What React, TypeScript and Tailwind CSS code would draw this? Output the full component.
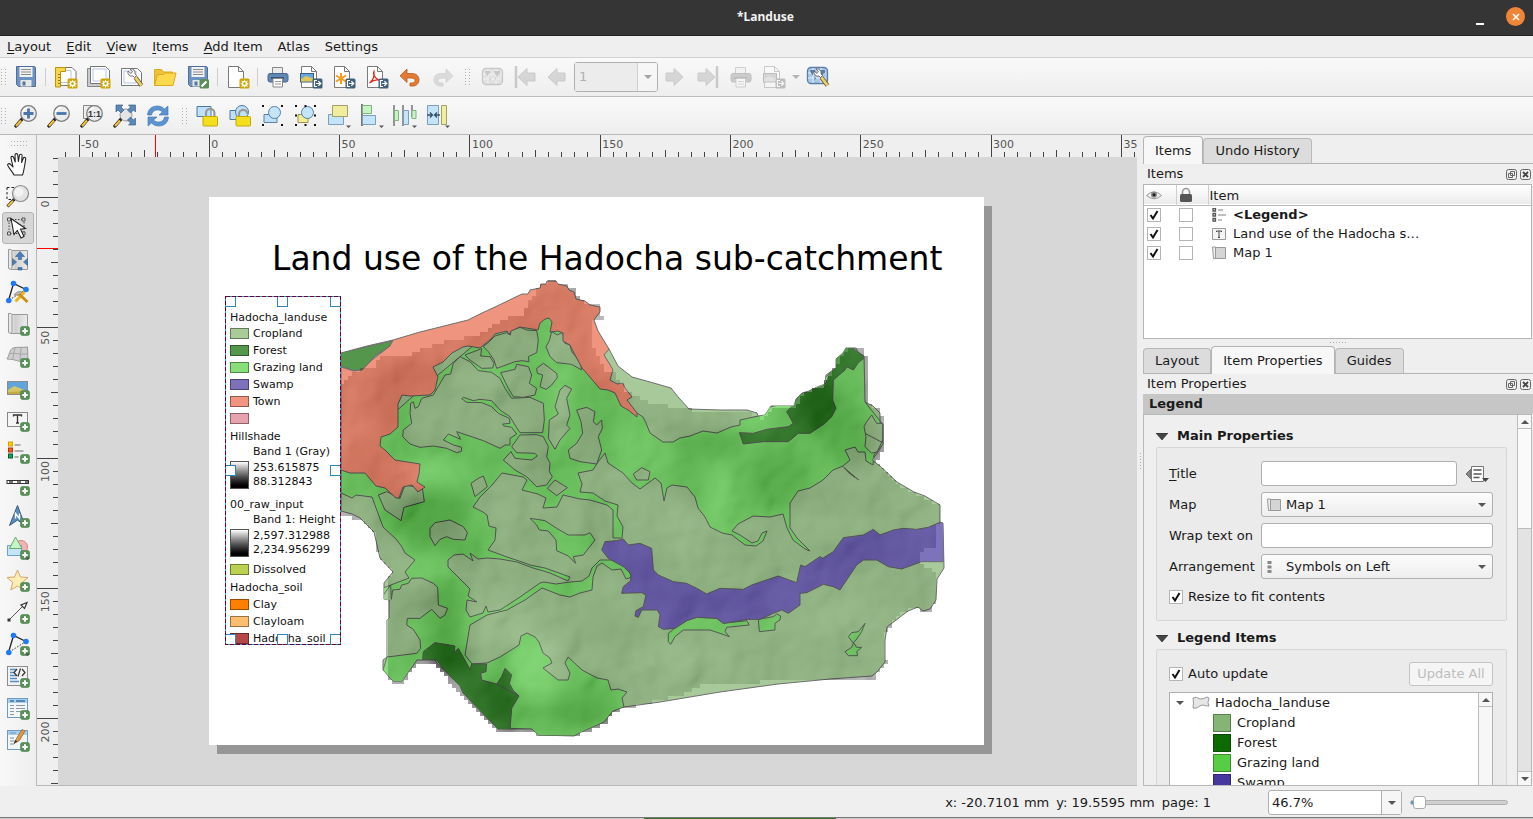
import React, { useState } from "react";
import type { ReactNode } from "react";

type Point = [number, number];

/* ---------- small icon parts, all on a 24 x 24 grid ---------- */

function Icon({ children, dim = false }: { children: ReactNode; dim?: boolean }) {
  return (
    <svg viewBox="0 0 24 24" aria-hidden="true" className={dim ? "h-6 w-6 shrink-0 opacity-35 grayscale" : "h-6 w-6 shrink-0"} fill="none">
      {children}
    </svg>
  );
}

const PlusBadge = () => (
  <g>
    <rect x="14.5" y="14.5" width="9" height="9" rx="2" fill="#5b8f5a" stroke="#4b7c4b" strokeWidth=".6" />
    <path d="M19 16.3v5.4M16.3 19h5.4" stroke="#fff" strokeWidth="2" />
  </g>
);
const StarBadge = () => (
  <g>
    <rect x="13.5" y="13.5" width="10" height="10" rx="1.5" fill="#cba400" />
    <path d="M18.5 14.5l1 2 2.3-.9-.8 2.3 2 .8-2 1 .9 2.2-2.3-.8-1 2-1-2-2.3.9.9-2.3-2-1 2-.9-.9-2.3 2.3.9z" fill="#fff" />
    <circle cx="18.5" cy="18.6" r="1.3" fill="#cba400" />
  </g>
);
const ExportBadge = () => (
  <g>
    <rect x="13.5" y="13.5" width="10" height="10" rx="1.5" fill="#43607a" />
    <path d="M18 15.5h-2.5v6H18M17 18.5h4M19.3 16.3l2.4 2.2-2.4 2.2" stroke="#fff" strokeWidth="1.2" />
  </g>
);
const Sheet = () => (
  <path d="M2.5 1.5h10l5 5v16h-15zM12.5 1.5v5h5" fill="#fff" stroke="#7a7a7a" />
);
const DropMark = () => <path d="M19 21.5h5l-2.5 2.5z" fill="#555" />;
const Handle = () => (
  <g>
    <path d="M9 14l-7 8" stroke="#222" strokeWidth="3.4" strokeLinecap="round" />
    <path d="M7 16.400l-5 5.500" stroke="#f3c13a" strokeWidth="2.200" />
  </g>
);
const Lens = () => (
  <g>
    <Handle />
    <circle cx="14.500" cy="9.500" r="7.800" fill="#ececec" stroke="#7d7d7d" strokeWidth="1.300" />
    <path d="M9 8a6 6 0 0 1 5-4.500" stroke="#fff" strokeWidth="1.500" />
  </g>
);
const Floppy = () => (
  <g>
    <path d="M2.500 1.500h18l1 1v19h-17l-2-2z" fill="#6c93c4" stroke="#4f6f98" />
    <rect x="5.500" y="2" width="13" height="10" fill="#f2f2f0" />
    <path d="M7 4.500h10M7 7h10M7 9.500h10" stroke="#8b8b8b" />
    <path d="M6.500 15h11v6.500h-11z" fill="#e7e7e4" />
    <rect x="8.500" y="16.500" width="3" height="4" fill="#56779f" />
  </g>
);
const Wrench = () => (
  <g>
    <path d="M8 6a4 4 0 0 0 5 5l1.500 1.500 2-2L15 9a4 4 0 0 0-5-5l2.500 2.500-1.500 2z" fill="#fff" stroke="#666" strokeWidth=".9" />
    <path d="M15.500 12.500l6 8" stroke="#6e5b21" strokeWidth="4.400" />
    <path d="M15.500 12.500l6 8" stroke="#ead16f" strokeWidth="2.800" />
  </g>
);
const Roll = () => (
  <g>
    <path d="M4 2.500h17.500v19H5z" fill="url(#rollFill)" stroke="#999" />
    <path d="M2.500 1.500c3-.5 3.500.5 3.500 2V20c0 1-3.500 2-3.500 0z" fill="#e9e9e9" stroke="#999" />
  </g>
);
const Printer = () => (
  <g>
    <path d="M6.500 2.500h10v7h-10z" fill="#ececec" stroke="#888" />
    <rect x="2" y="8.500" width="20" height="8.500" rx="2" fill="#6287b4" stroke="#46658c" />
    <path d="M5 13h13" stroke="#2e4663" strokeWidth="1.500" />
    <path d="M7 13.500h9.500v8.500H7z" fill="#fff" stroke="#888" />
    <path d="M9 16.500h6M9 19h6" stroke="#999" />
  </g>
);
const Photo = () => (
  <g>
    <rect x="1.500" y="8.500" width="13" height="8.500" fill="#66a7db" stroke="#3d5e7c" />
    <path d="M2 14l5-3 7 2.500v3H2z" fill="#e0c557" />
  </g>
);
const Globe = () => (
  <g>
    <rect x="1.500" y="2.500" width="20" height="16" rx="3.500" fill="#a9c8ea" stroke="#5b7ea8" strokeWidth="1.300" />
    <path d="M7 3v15M15 3v15M2 8h18M2 13h18" stroke="#e8f0f8" />
    <path d="M4 5h5l.5 2-2 1-1 2.500L4.500 7zM13 5h6v3l-2 1-1 2-2-3zM8.500 11.500l1.500 1.500-1.500 3zM14 11l1.500 1-1 3z" fill="#5f7d9f" />
  </g>
);
const Nodes = () => (
  <g>
    <path d="M2.500 20.500L7.500 3.500l12.500 6" stroke="#222" strokeWidth="1.300" />
    <path d="M20 9.500L2.500 20.500" stroke="#333" strokeDasharray="1.500 1.500" />
    <circle cx="7.500" cy="3.500" r="2.800" fill="#1f7af5" />
    <circle cx="20" cy="9.500" r="2.800" fill="#1f7af5" />
    <circle cx="2.800" cy="20.500" r="2.800" fill="#1f7af5" />
  </g>
);
const Padlock = ({ open = false }: { open?: boolean }) => (
  <g>
    <path d={open ? "M11 12.500V10a4.200 4.200 0 0 1 8.400 0" : "M11 13.500V9a4.200 4.200 0 0 1 8.400 0v4"} stroke="#9a9a94" strokeWidth="2.200" />
    <rect x="8" y="12.500" width="14.500" height="9.500" rx="1" fill="#f4df1c" stroke="#c7a800" />
  </g>
);
const Corners = () => (
  <path d="M1 1h2v2H1zM10.500 1h2v2h-2zM20 1h2v2h-2zM1 10.500h2v2H1zM20 10.500h2v2h-2zM1 20h2v2H1zM10.500 20h2v2h-2zM20 20h2v2h-2z" fill="#111" />
);

const fileTools: { name: string; art: ReactNode; dim?: boolean; gap?: boolean }[] = [
  { name: "Save Project", art: <Floppy />, gap: true },
  {
    name: "New Layout",
    art: (
      <g>
        <path d="M3 2.500h15l4 4v14H3z" fill="#fff" stroke="#777" />
        <path d="M6 5.500h11v12H6z" stroke="#b7c5ea" />
        <path d="M1.500 2.500h10v4h-5v15.500h-5z" fill="#f4d648" stroke="#b79411" />
        <path d="M4 9.500h2M4 12.500h2M4 15.500h2M4 18.500h2" stroke="#9b7d0f" />
        <StarBadge />
      </g>
    ),
  },
  {
    name: "Duplicate Layout",
    art: (
      <g>
        <path d="M.5 3.500h4v15h14v3H.5z" fill="#c9c9c9" stroke="#888" />
        <path d="M3.500 1.500h15l4 4v13h-19z" fill="#fff" stroke="#777" />
        <path d="M6 4h13v12H6z" stroke="#b7c5ea" />
        <StarBadge />
      </g>
    ),
  },
  {
    name: "Layout Manager",
    art: (
      <g>
        <path d="M1.500 3.500h16l4 4v13h-20z" fill="#fff" stroke="#777" />
        <path d="M4 6h12v12H4z" stroke="#b7c5ea" />
        <Wrench />
      </g>
    ),
  },
  {
    name: "Add Items from Template",
    art: (
      <g>
        <path d="M1.500 20.500v-16h7l2 2.500h9v13.500z" fill="#eec23a" stroke="#d9ab1d" />
        <path d="M1.500 20.500L4.500 9.500h6l2-1.500h10.500l-3 12.500z" fill="#fbd94d" stroke="#d9ab1d" />
      </g>
    ),
  },
  {
    name: "Save as Template",
    art: (
      <g>
        <Floppy />
        <rect x="13.500" y="14" width="9.500" height="9.500" rx="1.500" fill="#5b8f5a" />
        <path d="M15.500 21.500l5-5" stroke="#fff" strokeWidth="2.200" />
      </g>
    ),
    gap: true,
  },
  { name: "Page Properties", art: <g><Sheet /><StarBadge /></g>, gap: true },
  { name: "Print Layout", art: <Printer /> },
  { name: "Export as Image", art: <g><Sheet /><Photo /><ExportBadge /></g> },
  {
    name: "Export as SVG",
    art: (
      <g>
        <Sheet />
        <path d="M9 8v11M4 10.500l10 6M4 16.500l10-6" stroke="#f79a1c" strokeWidth="2" />
        <ExportBadge />
      </g>
    ),
  },
  {
    name: "Export as PDF",
    art: (
      <g>
        <Sheet />
        <path d="M4.500 18c4-3 5-8 4.500-11.500-1.500 3 2 8 5 8.500-4-.5-7 1-9.500 3z" stroke="#e0301e" strokeWidth="1.300" />
        <ExportBadge />
      </g>
    ),
  },
  {
    name: "Undo",
    art: <path d="M9 4v4.500h5c4.500 0 7 3 7 6.200 0 3.500-2.500 6.300-6 6.300h-3v-3h2c2 0 3-1 3-2.500S15.500 13 13 13H9v4.500l-7-6.700z" fill="#e37b35" stroke="#b85a1f" strokeWidth=".8" />,
  },
  {
    name: "Redo",
    art: <path d="M15 4v4.500h-5c-4.500 0-7 3-7 6.200C3 18.200 5.500 21 9 21h3v-3h-2c-2 0-3-1-3-2.500S8.500 13 11 13h4v4.500l7-6.700z" fill="#a9b0a9" stroke="#8b918b" strokeWidth=".8" />,
    dim: true,
  },
];

const zoomTools: { name: string; art: ReactNode }[] = [
  { name: "Zoom In", art: <g><Lens /><path d="M14.500 4.500v10M9.500 9.500h10" stroke="#4a76ab" strokeWidth="2.800" /></g> },
  { name: "Zoom Out", art: <g><Lens /><path d="M9.500 9.500h10" stroke="#4a76ab" strokeWidth="2.800" /></g> },
  {
    name: "Zoom to 100%",
    art: (
      <g>
        <path d="M3.500 1.500h9v13h-9z" fill="#eee" stroke="#888" />
        <Lens />
        <text x="8" y="13" fontSize="9" fontWeight="bold" fill="#333" fontFamily="Liberation Sans, sans-serif">1:1</text>
      </g>
    ),
  },
  {
    name: "Zoom Full",
    art: (
      <g>
        <Handle />
        <circle cx="13" cy="11" r="6" fill="#e4e4e4" stroke="#999" />
        <path d="M3 1h7l-2 2 3 3-3 3-3-3-2 2zM22.500 1v7l-2-2-3 3-3-3 3-3-2-2zM22.500 21h-7l2-2-3-3 3-3 3 3 2-2z" fill="#5a86b9" stroke="#3c628f" strokeWidth=".7" />
      </g>
    ),
  },
  {
    name: "Refresh View",
    art: (
      <path d="M1.500 11C2 5 6 2 11.500 2c3.500 0 5.500 1.500 7 3L22 2v9h-9l3.300-3C15 6.500 13.500 6 11.500 6 8 6 6 8 5.500 11zM22.500 13c-.5 6-4.500 9-10 9-3.500 0-5.500-1.500-7-3L2 22v-9h9l-3.300 3c1.300 1.500 2.800 2 4.800 2 3.500 0 5.500-2 6-5z" fill="#5c93d1" stroke="#3e73ae" strokeWidth=".6" />
    ),
  },
];

const arrangeTools: { name: string; art: ReactNode }[] = [
  { name: "Lock Selected Items", art: <g><path d="M2 2.500h14v10H2z" fill="#bfe0f8" stroke="#4c7b9e" /><Padlock /></g> },
  {
    name: "Unlock All Items",
    art: <g><path d="M2 6.500h8v9H2z" fill="#bfe0f8" stroke="#4c7b9e" /><circle cx="14" cy="8" r="6.500" fill="#bfe0f8" stroke="#4c7b9e" /><Padlock open /></g>,
  },
  {
    name: "Group Items",
    art: <g><path d="M3 10.500h13v8H3z" fill="#bfe0f8" stroke="#56829f" /><circle cx="13.500" cy="8.500" r="6" fill="#c4e4f9" stroke="#56829f" /><path d="M1 1h2v2H1zM20 1h2v2h-2zM1 20h2v2H1zM20 20h2v2h-2z" fill="#111" /></g>,
  },
  {
    name: "Ungroup Items",
    art: <g><path d="M4 10.500h10v8H4z" fill="#f2ee98" stroke="#9b9350" /><circle cx="13.500" cy="8.500" r="6" fill="#c4e4f9" stroke="#56829f" /><Corners /></g>,
  },
  {
    name: "Raise Selected Items",
    art: <g><path d="M1.500 10.500h15v10h-15z" fill="#c4e4f9" stroke="#7d9fb5" /><path d="M5.500 1.500h15v11h-15z" fill="#f0ee9c" stroke="#a3a06b" /><DropMark /></g>,
  },
  {
    name: "Align Selected Items",
    art: <g><path d="M2 0v22" stroke="#333" strokeWidth="1.300" /><path d="M2.500 1.500h9v8h-9z" fill="#c5f5c4" stroke="#82b283" /><path d="M2.500 11.500h13v9h-13z" fill="#c4e4f9" stroke="#7d9fb5" /><DropMark /></g>,
  },
  {
    name: "Distribute Objects",
    art: (
      <g>
        <path d="M1 1v21M10 1v21M19 1v12" stroke="#333" />
        <path d="M1.500 6.500h4v10h-4zM19 6.500h4v8h-4z" fill="#c5f5c4" stroke="#82b283" />
        <path d="M10.500 6.500h5v14h-5z" fill="#c4e4f9" stroke="#7d9fb5" />
        <DropMark />
      </g>
    ),
  },
  {
    name: "Resize Objects",
    art: (
      <g>
        <path d="M1.500 1.500h11v19h-11z" fill="#c4e4f9" stroke="#7d9fb5" />
        <path d="M15.500 1.500h5v19h-5z" fill="#f0ee9c" stroke="#a3a06b" />
        <path d="M1 11h5M4 8.500L6.500 11 4 13.500M14 11H9M11 8.500L8.500 11l2.500 2.500" stroke="#35506a" strokeWidth="1.300" />
        <DropMark />
      </g>
    ),
  },
];

const sideTools: { name: string; art: ReactNode; active?: boolean }[] = [
  {
    name: "Pan Layout",
    art: <path d="M8 23C6.500 19.500 3.500 17 1.800 13.500c-.7-1.700 1.400-2.600 2.700-1.200L7 15 5 6c-.3-1.900 2.200-2.200 2.700-.4L9.300 10 9 3c0-1.900 2.600-1.900 2.800 0l.6 6.500 1-6c.3-1.800 2.800-1.500 2.700.4L15.600 10.500l1.700-4.200c.7-1.600 2.800-1 2.400.8L18.500 14.500C18 17.500 17.500 20.500 16.500 23z" fill="#fff" stroke="#222" strokeWidth="1.100" strokeLinejoin="round" />,
  },
  {
    name: "Zoom",
    art: (
      <g>
        <path d="M1 3.500h12M1 3.500v12h6" stroke="#222" strokeDasharray="2.500 2" />
        <path d="M8.500 15l-7 7.500" stroke="#333" strokeWidth="3.200" />
        <path d="M7 17l-5 5" stroke="#f3c13a" strokeWidth="2" />
        <circle cx="14.500" cy="9.500" r="8" fill="#e3e3e3" stroke="#8a8a8a" strokeWidth="1.200" />
        <circle cx="13" cy="8" r="4.500" fill="#f3f3f3" />
      </g>
    ),
  },
  {
    name: "Select/Move Item",
    active: true,
    art: (
      <g>
        <path d="M3 3.500h15M3 3.500v14h15v-14" stroke="#444" strokeDasharray="1.500 1.500" />
        <path d="M1.500 2h3v3h-3zM16 2h3v3h-3zM1.500 16h3v3h-3zM16 16h3v3h-3z" fill="#ddd" stroke="#555" />
        <path d="M5 2.500l3 16 3.300-4 3.700 7.500 3-1.500-3.500-7.300 5-.7z" fill="#fff" stroke="#222" strokeWidth="1.100" />
      </g>
    ),
  },
  {
    name: "Move Item Content",
    art: (
      <g>
        <Roll />
        <path d="M14 3.500l4.500 5h-3v3h-3v-3h-3zM6.500 10.500l4 3.500-4 3.500zM21.500 10.500v7l-4-3.500zM12 22v-2.500h4V22z" fill="#4a7db5" stroke="#34618f" strokeWidth=".6" />
      </g>
    ),
  },
  {
    name: "Edit Nodes Item",
    art: (
      <g>
        <Nodes />
        <path d="M8 15c2-3 5-4 8-3l-2 3z" fill="#bbb" stroke="#888" />
        <path d="M9.500 21.500l9-9.500" stroke="#e9b61c" strokeWidth="3" />
        <path d="M13 14l8.500 8" stroke="#c98f12" strokeWidth="3" />
      </g>
    ),
  },
  { name: "Add Map", art: <g><Roll /><PlusBadge /></g> },
  {
    name: "Add 3D Map",
    art: (
      <g>
        <path d="M1 15C3 12 4 5 7 4c5-1.500 8 0 14.500-1l.5 15c-4 2-12-3-21-3z" fill="#cfcfcf" stroke="#999" />
        <path d="M4 9.500c6-1 11 2 18 0M9 4c-1 4-2 7-2 11M15 3.500c0 5-1 9-1 13" stroke="#a5a5a5" />
        <PlusBadge />
      </g>
    ),
  },
  {
    name: "Add Picture",
    art: (
      <g>
        <rect x="1.500" y="5.500" width="20" height="13" fill="#61a4dd" stroke="#8b8b8b" />
        <path d="M2 14l6-4 13 5v3H2z" fill="#d6c766" />
        <path d="M2 16l19-1v3H2z" fill="#c3ac3e" />
        <PlusBadge />
      </g>
    ),
  },
  {
    name: "Add Label",
    art: (
      <g>
        <rect x="1.500" y="4.500" width="20" height="14" fill="#f5f5f5" stroke="#888" />
        <path d="M7.500 8.500V7h8v1.500M11.500 7v8M10 15h3" stroke="#333" strokeWidth="1.300" />
        <PlusBadge />
      </g>
    ),
  },
  {
    name: "Add Legend",
    art: (
      <g>
        <rect x="2.500" y="2" width="4" height="4" fill="#ffd400" stroke="#e89b00" />
        <rect x="2.500" y="8" width="4" height="4" fill="#f25a1c" stroke="#b93306" />
        <rect x="2.500" y="14" width="4" height="4" fill="#17a35a" stroke="#0a5a30" />
        <path d="M8.500 5h6M8.500 11h9M8.500 17h4" stroke="#999" strokeWidth="1.500" />
        <PlusBadge />
      </g>
    ),
  },
  {
    name: "Add Scale Bar",
    art: (
      <g>
        <rect x="1" y="8.500" width="21.500" height="3" fill="#fff" stroke="#333" />
        <path d="M3 10h4M11 10h4M19 10h3" stroke="#777" strokeWidth="2" />
        <PlusBadge />
      </g>
    ),
  },
  {
    name: "Add North Arrow",
    art: (
      <g>
        <path d="M11.500 1.500l7.500 20-7.500-5.500L3.500 21.500z" fill="#5d8dbf" stroke="#38597d" />
        <path d="M9.500 14.500V9.500l4 5V9.500" stroke="#fff" strokeWidth="1.400" />
        <PlusBadge />
      </g>
    ),
  },
  {
    name: "Add Shape",
    art: (
      <g>
        <circle cx="15" cy="11" r="6.500" fill="#f6b3b3" stroke="#d98080" />
        <path d="M1.500 9.500h14v10h-14z" fill="#c4e4f9" stroke="#6da0c4" />
        <path d="M9.500 1l6.500 11.500H3.500z" fill="#c5f5c4" stroke="#6eaa70" />
        <PlusBadge />
        <DropMark />
      </g>
    ),
  },
  {
    name: "Add Marker",
    art: <g><path d="M11.500 2l3 7 7.500.5-5.800 5 2 7.500-6.700-4-6.700 4 2-7.500-5.800-5L8.500 9z" fill="#fbeeb4" stroke="#dba566" /><PlusBadge /></g>,
  },
  {
    name: "Add Arrow",
    art: (
      <g>
        <path d="M3 20L18 5" stroke="#555" />
        <path d="M21 2.500l-6 2.500 3.500 3.500z" fill="#fff" stroke="#333" strokeWidth="1.200" />
        <rect x="1.500" y="18.500" width="3" height="3" fill="#333" />
        <PlusBadge />
      </g>
    ),
  },
  { name: "Add Node Item", art: <g><Nodes /><PlusBadge /><DropMark /></g> },
  {
    name: "Add HTML",
    art: (
      <g>
        <rect x="1.500" y="2.500" width="20" height="19" fill="#f2f2f2" stroke="#8d8d8d" />
        <path d="M4 5.500h6M4 8.500h4M4 11.500h6M4 14.500h7M4 17.500h9" stroke="#5a8bc4" strokeWidth="1.600" />
        <path d="M11 5L8 8.500l3 3.500M16 5l3 3.500L16 12M14.500 4.500l-2.500 8" stroke="#333" strokeWidth="1.200" />
        <PlusBadge />
      </g>
    ),
  },
  {
    name: "Add Fixed Table",
    art: (
      <g>
        <rect x="1.500" y="2.500" width="20" height="19" fill="#f2f6f9" stroke="#6c9cc4" />
        <path d="M2 3h19v4H2z" fill="#a8d0ee" />
        <path d="M4 5h4M10 5h9" stroke="#3c6f9e" strokeWidth="1.500" />
        <path d="M4 9.500h4M10 9.500h9M4 12.500h4M10 12.500h9M4 15.500h4M10 15.500h9M4 18.500h4" stroke="#8a9aa8" />
        <PlusBadge />
      </g>
    ),
  },
  {
    name: "Add Attribute Table",
    art: (
      <g>
        <rect x="1.500" y="2.500" width="20" height="19" fill="#f2f6f9" stroke="#6c9cc4" />
        <path d="M2 3h19v4H2z" fill="#a8d0ee" />
        <path d="M4 5h6M4 10h4M4 13h4M4 16h4" stroke="#7590a6" strokeWidth="1.200" />
        <path d="M8 15.500l2.500-5L16 1.500l3 1.500-5.500 9.500z" fill="#dd9b4c" stroke="#9b6424" strokeWidth=".8" />
        <path d="M8 15.500l1-3.500 2.500 1.500z" fill="#333" />
        <PlusBadge />
      </g>
    ),
  },
];

/* ---------- toolbar pieces ---------- */

function ToolButton({ name, children, disabled }: { name: string; children: ReactNode; disabled?: boolean }) {
  return (
    <button type="button" aria-label={name} disabled={disabled} className="flex h-8 w-[33px] shrink-0 items-center justify-center">
      {children}
    </button>
  );
}
const Separator = () => <span className="mx-[3px] h-[18px] w-px shrink-0 bg-[#cfcfcf]" />;

function Grip({ vertical = true }: { vertical?: boolean }) {
  return (
    <svg aria-hidden="true" className={vertical ? "h-[18px] w-[5px] shrink-0" : "h-[5px] w-[17px] shrink-0"}>
      <path
        d={vertical ? "M.5 1v17M4.500 1v17" : "M1 .5h17M1 4.500h17"}
        stroke="#b0b0b0"
        strokeDasharray="1 2"
      />
    </svg>
  );
}

/* ---------- rulers ---------- */

const MM = 2.606;
const marks = Array.from({ length: 90 }, (_, i) => (i - 14) * 5);

function TopRuler() {
  return (
    <svg className="h-[22px] w-full bg-[#efefef]" fontFamily="DejaVu Sans, sans-serif" fontSize="11" fill="#555" shapeRendering="crispEdges">
      {marks.filter((mm) => mm >= -55 && mm <= 355).map((mm) => {
        const x = 172.3 + mm * MM;
        const major = mm % 50 === 0;
        return (
          <g key={mm}>
            <path d={`M${x} ${major ? 0 : mm % 25 === 0 ? 15 : 17}V22`} stroke="#444" />
            {major && <text x={x + 2} y="13">{mm}</text>}
          </g>
        );
      })}
      <path d="M118.500 0V22" stroke="#f00" />
    </svg>
  );
}

function SideRuler() {
  return (
    <svg className="h-full w-[21px] shrink-0 bg-[#efefef]" fontFamily="DejaVu Sans, sans-serif" fontSize="11" fill="#555">
      {marks.filter((mm) => mm >= -15 && mm <= 225).map((mm) => {
        const y = 40.4 + mm * MM;
        const major = mm % 50 === 0;
        return (
          <g key={mm}>
            <path d={`M${major ? 0 : mm % 25 === 0 ? 14 : 16} ${y}H21`} stroke="#444" shapeRendering="crispEdges" />
            {major && (
              <text transform={`translate(12 ${y + 3}) rotate(-90)`} textAnchor="end">{mm}</text>
            )}
          </g>
        );
      })}
      <path d="M0 91.500H21" stroke="#f00" shapeRendering="crispEdges" />
    </svg>
  );
}

/* ---------- map drawing ---------- */

const parse = (s: string): Point[] => s.trim().split(/\s+/).map((p) => p.split(",").map(Number) as Point);

/* raster edge: the outline stepped on a coarse pixel grid */
function stepped(s: string, cell = 4) {
  const pts = parse(s);
  const snap = (v: number) => Math.round(v / cell) * cell;
  let d = `M${snap(pts[0][0])} ${snap(pts[0][1])}`;
  for (let i = 0; i < pts.length; i++) {
    const [ax, ay] = pts[i];
    const [bx, by] = pts[(i + 1) % pts.length];
    const n = Math.max(1, Math.round(Math.max(Math.abs(bx - ax), Math.abs(by - ay)) / cell));
    for (let k = 1; k <= n; k++) {
      d += `H${snap(ax + ((bx - ax) * k) / n)}V${snap(ay + ((by - ay) * k) / n)}`;
    }
  }
  return d + "Z";
}

const boundary =
  "341,353 367,346 393,340 420,332 444,326 468,320 482,313 495,307 522,294 528,294 530,290 540,288 541,284 546,284 547,281 556,281 558,284 562,285 567,286 569,290 574,292 576,299 585,301 590,305 600,307 600,312 596,317 594,320 598,331 609,349 618,366 632,377 650,382 671,388 679,398 689,409 720,410 747,410 757,413 758,416 765,415 771,406 794,406 796,399 802,393 809,391 817,387 825,384 826,375 836,368 836,359 843,353 846,348 856,348 858,352 864,356 865,402 873,406 880,413 880,421 883,424 883,444 878,452 872,460 880,466 897,482 914,492 925,496 940,505 940,522 943,523 944,568 937,579 936,600 930,609 923,611 918,607 908,611 887,627 885,640 885,662 877,672 872,676 830,679 778,684 720,692 660,702 624,707 613,711 604,722 585,730 574,736 538,735 532,729 498,729 463,693 460,686 437,663 435,660 417,660 402,681 393,681 383,670 383,660 387,657 387,620 390,618 390,600 384,599 384,583 393,572 380,558 377,545 374,532 360,518 352,514 341,511";

const reliefEdge =
  "341,382 357,370 375,368 380,354 410,354 445,341 478,335 500,320 520,314 530,294 534,290 548,280 560,283 575,291 578,300 600,306 602,318 592,322 592,345 602,370 612,372 625,390 640,400 660,405 690,410 720,412 748,412 760,418 768,412 772,408 796,406 800,395 820,386 828,376 838,360 848,348 862,350 866,360 866,402 880,412 884,424 884,452 876,465 900,486 925,498 940,508 940,524 936,524 936,548 918,552 918,560 936,575 936,600 932,612 922,612 916,607 900,615 884,635 886,665 876,678 800,680 760,682 700,686 690,692 640,705 614,712 606,724 576,736 538,736 532,730 500,730 462,694 437,662 418,662 404,682 392,682 388,672 388,590 388,575 394,570 380,558 374,532 358,518 341,513";

const grazing =
  "341,493 352,498 356,495 372,497 376,508 383,527 396,539 402,547 405,553 415,560 405,572 409,578 396,583 383,588 383,600 387,657 383,670 393,682 402,682 417,660 437,660 463,690 498,728 532,729 538,736 574,736 604,722 613,711 624,707 622,698 627,692 618,689 611,690 608,680 597,678 582,670 568,657 565,663 570,673 568,680 558,680 543,668 552,663 550,658 543,653 539,642 535,637 527,633 521,636 519,645 500,657 487,663 472,664 465,655 467,643 470,625 487,615 507,610 525,600 542,588 560,595 570,597 580,593 592,590 593,577 597,566 602,563 612,570 621,569 626,579 632,577 626,567 612,560 600,560 592,568 589,576 582,581 570,582 556,584 544,582 540,583 520,597 500,610 488,612 486,606 483,613 470,617 466,610 467,600 477,602 468,596 470,589 459,578 448,567 448,560 454,555 463,554 473,561 470,553 478,559 487,558 500,559 517,562 533,568 550,573 568,581 570,577 559,573 545,568 530,565 522,562 507,557 488,550 495,540 496,528 489,526 487,515 483,512 473,507 480,497 492,485 502,473 523,477 527,480 522,490 538,494 546,498 543,508 557,507 563,495 580,499 590,500 607,505 613,510 613,538 622,538 623,527 617,516 618,505 605,501 593,493 580,492 582,484 578,473 593,470 598,462 605,453 608,463 623,473 632,483 640,489 655,478 661,483 664,501 667,488 672,485 687,487 695,497 698,508 705,517 710,527 722,533 732,535 745,545 756,546 763,541 767,531 762,533 758,541 752,543 740,535 732,531 738,524 753,516 770,517 783,514 787,528 793,540 805,549 810,551 797,538 790,528 790,503 798,491 810,488 823,480 833,470 843,466 850,460 845,450 855,447 858,452 865,452 866,461 873,465 874,455 883,444 880,421 865,402 864,355 845,360 800,400 770,407 763,415 740,420 740,425 731,427 717,433 703,431 690,436 680,438 673,442 663,442 650,433 646,423 643,417 637,413 595,370 560,320 545,300 480,340 420,390 341,460";

const town =
  "393,340 420,332 444,326 468,320 482,313 495,307 522,294 528,294 530,290 540,288 541,284 546,284 547,281 556,281 558,284 567,286 569,290 574,292 576,299 585,301 590,305 600,307 600,312 596,317 594,320 598,331 609,349 604,355 609,363 613,370 610,380 617,384 623,383 625,388 632,397 627,400 637,413 637,417 628,410 621,406 615,393 608,390 600,389 589,376 582,368 575,355 570,345 563,341 563,333 558,331 550,332 552,322 549,318 545,319 540,323 538,330 520,327 511,331 509,335 507,331 495,334 491,339 480,348 468,346 463,347 452,353 443,362 433,367 438,377 435,390 430,395 410,396 402,395 398,404 398,427 390,434 381,437 380,446 385,450 395,460 420,464 419,474 417,482 425,487 418,492 412,485 403,487 399,498 396,498 385,488 376,486 365,473 350,473 341,470 341,367 354,371 362,370 373,359 390,346";

/* coordinates below are on a 3x grid; each group carries its origin */
const islands = [
  "190,110 208,95 225,78 260,68 272,75 272,62 300,52 320,60 350,62 355,90 350,128 325,140 327,155 305,152 285,155 230,175 222,150 205,125",
  "135,135 185,116 182,138 210,140 222,160 218,174 185,175 150,150",
  "120,140 150,155 175,182 215,187 240,205 255,235 275,265 330,262 370,280 373,330 368,368 300,368 285,345 270,320 240,300 215,272 180,268 160,272 130,262 125,266 140,277 185,278 215,290 235,310 268,325 270,340 248,342 252,348 275,352 290,372 270,385 270,405 255,405 240,415 190,392 110,365 122,388 85,372 70,390 100,405 125,412 124,424 110,428 80,415 40,408 0,412 -30,402 -52,380 -50,360 -25,340 -30,310 -28,280 -20,276 -15,295 -5,290 5,265 40,255 75,195 92,192 100,160",
  "242,188 285,178 290,163 325,170 335,195 328,220 350,235 345,255 310,262 280,260 265,235",
  "395,65 412,75 428,67 435,100 450,105 455,125 480,155 485,180 455,163 410,158 390,140 378,110 388,92",
  "350,175 370,160 410,190 412,203 395,225 378,238 360,230 368,195 352,190",
  "420,240 435,226 455,237 440,265 450,315 440,345 450,355 420,390 405,418 385,385 388,330 415,312 405,290",
  "470,300 500,292 525,305 520,335 530,345 545,330 547,355 535,380 545,420 530,462 480,455 450,445 445,420 470,400 488,370 483,335",
  "300,375 350,374 370,380 385,410 380,440 390,460 388,485 397,500 380,525 350,530 320,500 285,480 250,450 273,425 285,445 335,450 352,438 345,430 290,428 275,410",
  "153,520 175,505 190,498 202,530 165,560",
  "382,535 405,510 442,533 410,557",
  "30,680 30,655 45,638 90,630 130,650 142,668 135,690 100,688 80,680 60,688 45,707",
  "640,492 665,473 690,485 685,510 650,510",
];

const blobs: [number, number, number, number, string][] = [
  [425, 515, 44, 26, "#1f1f1f"], [445, 550, 34, 20, "#3a3a3a"], [392, 400, 22, 35, "#5c5c5c"], [414, 372, 26, 14, "#5c5c5c"],
  [540, 345, 40, 14, "#8d8d8d"], [500, 322, 40, 9, "#777"], [560, 310, 30, 16, "#999"], [470, 420, 60, 24, "#999"],
  [430, 470, 36, 12, "#c4c4c4"], [425, 570, 28, 16, "#b0b0b0"], [444, 620, 20, 46, "#303030"], [452, 660, 24, 16, "#1c1c1c"],
  [505, 700, 20, 30, "#505050"],
  [700, 445, 44, 16, "#404040"], [780, 478, 32, 30, "#3c3c3c"], [825, 410, 24, 32, "#161616"], [850, 440, 22, 30, "#333"],
  [720, 500, 11, 40, "#c8c8c8"], [640, 450, 30, 26, "#b4b4b4"], [605, 425, 9, 36, "#3c3c3c"], [560, 390, 8, 60, "#c8c8c8"],
  [600, 400, 20, 20, "#707070"], [690, 490, 14, 30, "#606060"],
  [535, 665, 26, 34, "#dedede"], [575, 712, 40, 16, "#242424"], [600, 690, 18, 12, "#5a5a5a"], [540, 712, 14, 16, "#666"],
  [500, 620, 30, 20, "#c8c8c8"], [600, 625, 16, 26, "#858585"], [625, 645, 12, 26, "#888"], [680, 660, 50, 14, "#c2c2c2"],
  [850, 620, 40, 20, "#bdbdbd"], [840, 500, 44, 10, "#828282"], [760, 560, 40, 8, "#888"], [680, 530, 16, 30, "#bbb"],
  [655, 555, 10, 26, "#888"], [540, 530, 24, 18, "#888"], [590, 530, 12, 26, "#8a8a8a"], [900, 590, 24, 18, "#939393"],
  [525, 575, 44, 8, "#919191"], [400, 630, 20, 12, "#949494"], [760, 425, 20, 8, "#bbb"], [745, 408, 24, 6, "#c5c5c5"],
  [490, 380, 40, 14, "#aaa"], [700, 598, 60, 10, "#7c7c7c"], [640, 570, 20, 14, "#7c7c7c"], [850, 552, 60, 10, "#7c7c7c"],
];

const Region = ({ pts, fill }: { pts: string; fill: string }) => (
  <polygon points={pts} fill={fill} vectorEffect="non-scaling-stroke" />
);

function LanduseMap() {
  const relief = stepped(reliefEdge);
  return (
    <svg viewBox="209 197 775 548" role="img" aria-label="Land use map" className="block h-[548px] w-[775px]">
      <defs>
        <filter id="soft" x="-20%" y="-20%" width="140%" height="140%">
          <feGaussianBlur stdDeviation="8" />
        </filter>
        <filter id="terrain" x="0" y="0" width="100%" height="100%">
          <feTurbulence type="fractalNoise" baseFrequency=".02 .02" numOctaves="3" seed="8" />
          <feDiffuseLighting surfaceScale="16" diffuseConstant="1" lightingColor="#fff">
            <feDistantLight azimuth="215" elevation="44" />
          </feDiffuseLighting>
          <feGaussianBlur stdDeviation="1.5" />
        </filter>
        <clipPath id="reliefClip"><path d={relief} /></clipPath>
        <clipPath id="boundaryClip"><polygon points={boundary} /></clipPath>
      </defs>
      <g clipPath="url(#reliefClip)">
        <rect x="320" y="270" width="640" height="480" fill="#a4a4a4" />
        <g filter="url(#soft)">
          <polygon points={grazing} fill="#6a6a6a" opacity=".75" />
          {blobs.map(([cx, cy, rx, ry, fill]) => (
            <ellipse key={`${cx}-${cy}`} cx={cx} cy={cy} rx={rx} ry={ry} fill={fill} />
          ))}
        </g>
        <rect x="320" y="270" width="640" height="480" filter="url(#terrain)" opacity=".27" />
      </g>
      <g opacity=".7" strokeWidth="1" stroke="#303030" strokeLinejoin="round">
        <Region pts={boundary} fill="#84b470" />
        <g clipPath="url(#boundaryClip)">
          <Region pts={grazing} fill="#57cd43" />
          <g transform="translate(420 310) scale(.33333)">
            {islands.map((pts) => <Region key={pts} pts={pts} fill="#84b470" />)}
            <Region pts="330,625 350,628 375,632 410,655 445,675 495,675 510,668 525,690 490,735 460,740 467,760 445,738 410,722 408,690 385,663 358,660 350,645" fill="#57cd43" />
          </g>
          <g transform="translate(220 500) scale(.33333)">
            <Region pts="490,285 512,255 514,298 518,270 540,268 545,255 565,250 575,235 605,234 640,250 653,262 655,315 683,325 675,345 660,355 635,328 600,355 562,355 560,375 580,388 600,420 602,445 590,460 510,470 480,470 480,350" fill="#84b470" />
            <Region pts="610,455 645,428 705,438 702,458 715,445 750,508 755,492 800,492 798,515 782,520 785,540 830,552 845,530 855,505 875,525 868,550 880,572 897,588 875,625 870,690 835,690 725,575 650,480 608,480" fill="#0c6a00" />
            <path d="M830 552L897 588" vectorEffect="non-scaling-stroke" />
          </g>
          <g transform="translate(220 280) scale(.33333)">
            <Region pts="475,645 500,635 540,655 555,615 607,625 613,665 552,682 543,722 495,690" fill="#84b470" />
            <Region pts="363,218 520,182 510,198 465,228 430,268 400,272 363,258" fill="#0c6a00" />
          </g>
          <g transform="translate(540 270) scale(.33333)">
            <Region pts="980,455 995,435 1010,460 1028,460 1028,510 1012,545 995,550 975,530 978,500 972,470" fill="#84b470" />
            <path d="M975 490L1028 518M910 590Q930 615 957 630" vectorEffect="non-scaling-stroke" />
            <Region pts="598,488 640,490 680,478 745,470 760,460 740,425 765,400 775,375 855,345 887,265 925,225 975,262 955,278 940,300 920,290 915,300 880,330 878,390 888,415 875,440 855,460 810,490 775,490 745,515 670,515 610,522" fill="#0c6a00" />
          </g>
          <g transform="translate(560 490) scale(.33333)">
            <Region pts="325,455 325,430 350,410 380,392 410,382 470,385 490,400 560,392 568,405 500,412 495,425 508,440 480,430 450,420 370,420 345,440 332,463" fill="#57cd43" />
            <Region pts="595,388 640,380 650,372 662,378 660,390 645,400 645,420 598,425" fill="#57cd43" />
            <Region pts="915,400 905,425 888,450 880,457 890,472 905,472 890,485 893,497 865,497 855,485 875,472 880,460 865,440 875,428 895,425" fill="#57cd43" />
            <Region pts="125,180 135,155 170,152 190,147 205,165 240,160 275,175 280,240 295,255 340,275 380,280 410,295 440,312 480,295 550,298 575,285 655,258 710,278 722,225 735,230 780,200 788,205 820,185 850,143 910,135 940,118 960,135 1000,120 1030,115 1070,118 1105,112 1140,97 1152,100 1150,215 1085,215 1025,237 985,230 950,210 910,210 890,225 840,300 820,290 790,283 740,308 720,310 720,345 685,370 665,360 640,370 600,388 565,388 490,400 470,385 440,383 410,382 380,392 345,415 310,418 295,410 300,375 292,360 245,360 235,382 225,378 228,362 250,350 258,315 245,308 185,310 190,290 212,272 212,250 190,230 145,205" fill="#47389f" />
          </g>
          <Region pts={town} fill="#e96848" />
        </g>
      </g>
    </svg>
  );
}

/* ---------- legend shown on the page ---------- */

function LegendRow({ color, children }: { color: string; children?: ReactNode }) {
  return (
    <div className="flex h-[17px] items-center gap-[4px]">
      <span className={`h-[11px] w-[19px] border border-black/40 ${color}`} />
      {children}
    </div>
  );
}
const Ramp = ({ high, low }: { high: string; low: string }) => (
  <div className="mt-[3px] flex gap-[4px]">
    <span className="h-7 w-[19px] border border-[#555] bg-linear-to-b from-white to-black" />
    <span className="leading-[14px]">{high}<br />{low}</span>
  </div>
);

function PageLegend() {
  return (
    <div className="absolute top-[99px] left-4 h-[349px] w-[116px] bg-white text-[11px] whitespace-nowrap text-[#111]">
      <div className="h-full overflow-hidden pt-[13px] pl-[5px]">
        <div className="h-4 leading-[18px]">Hadocha_landuse</div>
        <LegendRow color="bg-[#a9cb98]">Cropland</LegendRow>
        <LegendRow color="bg-[#52974b]">Forest</LegendRow>
        <LegendRow color="bg-[#88df7a]">Grazing land</LegendRow>
        <LegendRow color="bg-[#7d71bc]">Swamp</LegendRow>
        <LegendRow color="bg-[#f0957f]">Town</LegendRow>
        <LegendRow color="bg-[#e6a3ad]" />
        <div className="h-[18px] leading-5">Hillshade</div>
        <div className="h-[13px] pl-[23px] leading-[13px]">Band 1 (Gray)</div>
        <Ramp high="253.615875" low="88.312843" />
        <div className="mt-2 h-4 leading-4">00_raw_input</div>
        <div className="h-[13px] pl-[23px] leading-[13px]">Band 1: Height</div>
        <Ramp high="2,597.312988" low="2,234.956299" />
        <div className="pt-1"><LegendRow color="bg-[#bad04f]">Dissolved</LegendRow></div>
        <div className="h-[18px] leading-5">Hadocha_soil</div>
        <LegendRow color="bg-[#ff8000]">Clay</LegendRow>
        <LegendRow color="bg-[#fdbf6f]">Clayloam</LegendRow>
        <LegendRow color="bg-[#b64749]">Hadocha_soil</LegendRow>
      </div>
      <svg className="absolute inset-0 h-full w-full" viewBox="0 0 116 349" fill="none" shapeRendering="crispEdges" aria-hidden="true">
        <path d="M.5.5h115v348H.5z" stroke="#3d9bd0" />
        <path d="M.5.500h10v10H.5zM52.500.500h10v10h-10zM105.500.500h10v10h-10zM.5 169.500h10v10H.5zM105.500 169.500h10v10h-10zM.5 338.500h10v10H.5zM52.500 338.500h10v10h-10zM105.500 338.500h10v10h-10z" fill="#fff" stroke="#2f86bd" />
        <path d="M.5.5h115v348H.5z" stroke="#6a0032" strokeDasharray="4 2" />
      </svg>
    </div>
  );
}

/* ---------- right-hand panels ---------- */

function Tab({ label, active = false }: { label: string; active?: boolean }) {
  return (
    <button
      type="button"
      role="tab"
      aria-selected={active}
      className={
        active
          ? "-mb-px h-7 rounded-t border border-b-0 border-[#b4b4b4] bg-[#f7f7f7] px-[11px]"
          : "h-[25px] rounded-t border border-b-0 border-[#b9b9b9] bg-[#dcdcdc] px-[11px]"
      }
    >
      {label}
    </button>
  );
}

function DockTitle({ children }: { children: ReactNode }) {
  return (
    <div className="flex h-5 shrink-0 items-center gap-[3px] pr-0.5 pl-1">
      <h2 className="flex-1">{children}</h2>
      <button type="button" aria-label="Float panel" className="h-[11px] w-[11px]">
        <svg viewBox="0 0 11 11" fill="none" stroke="#666" aria-hidden="true"><rect x=".5" y=".5" width="10" height="10" rx="2" /><path d="M4.500 2.500h4v4h-4zM2.500 4.500h4v4h-4z" /></svg>
      </button>
      <button type="button" aria-label="Close panel" className="h-[11px] w-[11px]">
        <svg viewBox="0 0 11 11" fill="none" stroke="#666" aria-hidden="true"><rect x=".5" y=".5" width="10" height="10" rx="2" /><path d="M3 3l5 5M8 3L3 8" stroke="#444" strokeWidth="1.800" /></svg>
      </button>
    </div>
  );
}

function Check({ label, on, hideLabel = false }: { label: string; on: boolean; hideLabel?: boolean }) {
  const [checked, setChecked] = useState(on);
  return (
    <label className="flex items-center gap-[5px]">
      <span className="grid h-[14px] w-[14px] shrink-0 place-items-center">
        <input
          type="checkbox"
          checked={checked}
          onChange={(e) => setChecked(e.target.checked)}
          aria-label={hideLabel ? label : undefined}
          className="col-start-1 row-start-1 h-[14px] w-[14px] appearance-none border border-[#b5b5b5] bg-white"
        />
        {checked && (
          <svg viewBox="0 0 14 14" fill="none" className="pointer-events-none col-start-1 row-start-1 h-[14px] w-[14px]" aria-hidden="true">
            <path d="M3.500 7l2.500 3.500 4.500-7.500" stroke="#111" strokeWidth="2" />
          </svg>
        )}
      </span>
      {!hideLabel && label}
    </label>
  );
}

const MiniMap = () => (
  <svg viewBox="0 0 14 14" className="h-[14px] w-[14px]" aria-hidden="true" fill="none">
    <path d="M2 1.500h11.500v11H2.500z" fill="#d5d5d5" stroke="#999" />
    <path d="M.5 1h3v11.500h-2z" fill="#eee" stroke="#999" />
  </svg>
);
const MiniLabel = () => (
  <svg viewBox="0 0 14 14" className="h-[14px] w-[14px]" aria-hidden="true" fill="none">
    <path d="M.5 1.500h13v11H.5z" fill="#f4f4f4" stroke="#999" />
    <path d="M4.500 5V4h5v1M7 4v6.500M6 10.500h2" stroke="#444" />
  </svg>
);
const MiniLegend = () => (
  <svg viewBox="0 0 14 14" className="h-[14px] w-[14px]" aria-hidden="true" fill="none">
    <path d="M1 .5h2.500v2.500H1zM1 5.500h2.500V8H1zM1 10.500h2.500V13H1z" stroke="#555" strokeWidth="1.300" />
    <path d="M6 2h5M6 7h8M6 12h4" stroke="#aaa" strokeWidth="1.300" />
  </svg>
);

const layoutItems = [
  { name: "<Legend>", icon: <MiniLegend />, strong: true },
  { name: "Land use of the Hadocha s…", icon: <MiniLabel />, strong: false },
  { name: "Map 1", icon: <MiniMap />, strong: false },
];

const Caret = ({ up = false }: { up?: boolean }) => (
  <svg viewBox="0 0 8 4" className="pointer-events-none h-1 w-2 shrink-0" aria-hidden="true">
    <path d={up ? "M0 4h8L4 0z" : "M0 0h8L4 4z"} fill="#555" />
  </svg>
);

const fieldClass = "h-[25px] min-w-0 flex-1 rounded-[3px] border border-[#b0b0b0] bg-white px-1.5";

function Choice({ id, icon, options }: { id: string; icon: ReactNode; options: string[] }) {
  return (
    <div className="grid min-w-0 flex-1 items-center">
      <select id={id} className="col-start-1 row-start-1 h-[25px] appearance-none rounded-[3px] border border-[#b0b0b0] bg-linear-to-b from-[#fcfcfc] to-[#eeeeee] pl-6">
        {options.map((o) => <option key={o}>{o}</option>)}
      </select>
      <span className="pointer-events-none col-start-1 row-start-1 flex items-center justify-between pr-[7px] pl-1.5">
        {icon}
        <Caret />
      </span>
    </div>
  );
}

function SectionHeader({ children }: { children: ReactNode }) {
  return (
    <h3 className="flex h-[22px] items-center gap-[9px] font-bold">
      <svg viewBox="0 0 12 7" className="h-[7px] w-3" aria-hidden="true"><path d="M0 0h12L6 7z" fill="#444" stroke="#222" strokeWidth=".6" /></svg>
      {children}
    </h3>
  );
}

function ScrollBar({ thumb, down = true }: { thumb: string; down?: boolean }) {
  return (
    <div className="flex w-[14px] shrink-0 flex-col border-l border-[#bcbcbc] bg-[#e3e3e3]">
      <button type="button" aria-label="Scroll up" className="flex h-[14px] items-center justify-center border-b border-[#bcbcbc] bg-[#f7f7f7]"><Caret up /></button>
      <div className={thumb} />
      {down && (
        <button type="button" aria-label="Scroll down" className="mt-auto flex h-[14px] items-center justify-center border-t border-[#bcbcbc] bg-[#f7f7f7]"><Caret /></button>
      )}
    </div>
  );
}

const classes = [
  { name: "Cropland", color: "bg-[#85b573] border-[#5a7d4e]" },
  { name: "Forest", color: "bg-[#0c6a00] border-[#0a4a02]" },
  { name: "Grazing land", color: "bg-[#57cd43] border-[#3b8c2e]" },
  { name: "Swamp", color: "bg-[#47389f] border-[#30276d]" },
];

function SidePanels() {
  return (
    <aside className="flex w-[390px] shrink-0 flex-col overflow-hidden">
      <div role="tablist" className="mt-px flex h-[28px] shrink-0 items-end border-b border-[#b4b4b4]">
        <Tab label="Items" active />
        <Tab label="Undo History" />
      </div>
      <DockTitle>Items</DockTitle>
      <div className="mr-px h-[155px] shrink-0 border border-[#b4b4b4] bg-white">
        <table className="w-full table-fixed border-collapse text-left">
          <colgroup><col className="w-8" /><col className="w-8" /><col /></colgroup>
          <thead>
            <tr className="h-5 border-b border-[#b9b9b9] bg-linear-to-b from-white to-[#ececec]">
              <th className="border-r border-[#cfcfcf] p-0" aria-label="Visible">
                <svg viewBox="0 0 16 10" className="ml-0.5 h-[10px] w-4" fill="none" aria-hidden="true">
                  <path d="M.5 5.500Q8-2 15.500 5.500 8 12 .5 5.500z" fill="#eee" stroke="#999" />
                  <circle cx="8" cy="4.800" r="3" fill="#888" /><circle cx="8" cy="4.800" r="1.500" fill="#222" />
                </svg>
              </th>
              <th className="border-r border-[#cfcfcf] p-0" aria-label="Locked">
                <svg viewBox="0 0 14 16" className="ml-0.5 h-4 w-[14px]" fill="none" aria-hidden="true">
                  <path d="M3.500 8V5a3.500 3.500 0 0 1 7 0v3" stroke="#999" strokeWidth="1.600" /><rect x="1" y="7" width="12" height="8" rx="1.500" fill="#555" />
                </svg>
              </th>
              <th className="p-0 pt-0.5 pl-px font-normal">Item</th>
            </tr>
          </thead>
          <tbody>
            {layoutItems.map((it) => (
              <tr key={it.name} className="h-[19px]">
                <td className="p-0 pl-[3px]"><Check label={`Show ${it.name}`} on hideLabel /></td>
                <td className="p-0 pl-[3px]"><Check label={`Lock ${it.name}`} on={false} hideLabel /></td>
                <td className="p-0 pl-1">
                  <span className={it.strong ? "flex items-center gap-[7px] font-bold" : "flex items-center gap-[7px]"}>{it.icon}{it.name}</span>
                </td>
              </tr>
            ))}
          </tbody>
        </table>
      </div>
      <div className="flex h-[6px] shrink-0 items-center justify-center"><svg className="h-px w-4" aria-hidden="true"><path d="M0 .5h16" stroke="#aaa" strokeDasharray="1 2" /></svg></div>
      <div role="tablist" className="flex h-[29px] shrink-0 items-end border-b border-[#b4b4b4]">
        <Tab label="Layout" />
        <Tab label="Item Properties" active />
        <Tab label="Guides" />
      </div>
      <DockTitle>Item Properties</DockTitle>
      <div className="h-5 shrink-0 bg-[#c6c6c6] pl-1.5 leading-5 font-bold">Legend</div>
      <div className="mr-px flex min-h-0 flex-1 border border-[#b9b9b9]">
        <div className="min-w-0 flex-1 overflow-hidden px-3 pt-2.5 pr-[10px]">
          <SectionHeader>Main Properties</SectionHeader>
          <section className="flex flex-col gap-1.5 rounded-xs border border-[#d6d6d6] bg-[#ebebeb] px-3 pt-[13px] pr-[13px] pb-2">
            <div className="flex items-center">
              <label htmlFor="title" className="w-[92px]"><u className="underline-offset-2">T</u>itle</label>
              <input id="title" type="text" className={fieldClass} />
              <button type="button" aria-label="Title variable" className="ml-2 flex h-[25px] w-7 items-center">
                <svg viewBox="0 0 24 18" className="h-[18px] w-6" fill="none" aria-hidden="true">
                  <path d="M1 9l5-5v10z" fill="#888" stroke="#666" />
                  <path d="M6.500 1.500h12v15h-12z" fill="#fff" stroke="#777" />
                  <path d="M8.500 5h8M8.500 9h8M8.500 12.500h6" stroke="#555" strokeWidth="1.400" />
                  <path d="M17 13h7l-3.500 4z" fill="#444" />
                </svg>
              </button>
            </div>
            <div className="flex items-center">
              <label htmlFor="map" className="w-[92px]">Map</label>
              <Choice id="map" icon={<MiniMap />} options={["Map 1"]} />
            </div>
            <div className="flex items-center">
              <label htmlFor="wrap" className="w-[92px] whitespace-nowrap">Wrap text on</label>
              <input id="wrap" type="text" className={fieldClass} />
            </div>
            <div className="flex items-center">
              <label htmlFor="arrangement" className="w-[92px]">Arrangement</label>
              <Choice
                id="arrangement"
                icon={<svg viewBox="0 0 5 14" className="h-[14px] w-[5px]" aria-hidden="true"><path d="M.5 1h4v3h-4zM.5 5.500h4v3h-4zM.5 10h4v3h-4z" fill="#888" /></svg>}
                options={["Symbols on Left", "Symbols on Right"]}
              />
            </div>
            <div className="flex h-[27px] items-center pb-1"><Check label="Resize to fit contents" on /></div>
          </section>
          <div className="pt-1.5"><SectionHeader>Legend Items</SectionHeader></div>
          <section className="rounded-xs border border-[#d6d6d6] bg-[#ebebeb] p-3 pr-[13px]">
            <div className="flex items-center justify-between">
              <Check label="Auto update" on />
              <button type="button" disabled className="h-6 w-[84px] rounded-[3px] border border-[#c4c4c4] bg-[#f5f5f5] text-[#bdbdbd]">Update All</button>
            </div>
            <div className="mt-1.5 flex h-[220px] border border-[#b0b0b0] bg-white">
              <ul className="flex-1">
                <li className="flex h-5 items-center gap-[5px] pl-1.5">
                  <Caret />
                  <svg viewBox="0 0 18 14" className="ml-[3px] h-[14px] w-[18px]" fill="none" aria-hidden="true"><path d="M1 2q3-2 7 1 4 0 7-2l2 1q-2 5 0 8-4 0-6-1-3 0-6 3H1q1-5 0-10z" fill="#e6e6e6" stroke="#999" /></svg>
                  Hadocha_landuse
                </li>
                {classes.map((c) => (
                  <li key={c.name} className="flex h-5 items-center gap-1.5 pl-[43px]">
                    <span className={`h-[18px] w-[18px] border ${c.color}`} />
                    {c.name}
                  </li>
                ))}
              </ul>
              <ScrollBar thumb="flex-1 bg-[#f7f7f7]" down={false} />
            </div>
          </section>
        </div>
        <ScrollBar thumb="h-[100px] border-b border-[#bcbcbc] bg-[#fafafa]" />
      </div>
    </aside>
  );
}

/* ---------- window ---------- */

const menus: [string, string][] = [["L", "ayout"], ["E", "dit"], ["V", "iew"], ["I", "tems"], ["A", "dd Item"], ["", "Atlas"], ["", "Settings"]];

const ArrowLeft = () => <path d="M2 12l9-8.500V8h8v8h-8v4.500z" fill="#8fa3b8" stroke="#6d8196" />;
const ArrowRight = () => <path d="M20 12l-9-8.500V8H3v8h8v4.500z" fill="#8fa3b8" stroke="#6d8196" />;

export default function App() {
  const [zoom, setZoom] = useState("46.7%");
  return (
    <div className="flex h-screen flex-col overflow-hidden bg-[#efefef] font-['DejaVu_Sans',sans-serif] text-[13px] leading-4 text-[#1a1a1a]">
      <svg className="absolute h-0 w-0" aria-hidden="true">
        <defs><linearGradient id="rollFill"><stop offset="0" stopColor="#f4f4f4" /><stop offset=".3" stopColor="#cfcfcf" /><stop offset="1" stopColor="#ececec" /></linearGradient></defs>
      </svg>

      <header className="grid h-9 shrink-0 grid-cols-[1fr_auto_1fr] items-center border-b border-[#222] bg-[#353535] pb-0.5 text-[#f2f2f2]">
        <span />
        <h1 className="pr-0.5 font-['Noto_Sans',sans-serif] text-[12px] font-bold">*Landuse</h1>
        <div className="flex items-center justify-end gap-4 pr-2">
          <button type="button" aria-label="Minimize" className="flex h-5 w-5 items-end justify-center pb-0.5"><span className="h-0.5 w-2 bg-white" /></button>
          <button type="button" aria-label="Close" className="flex h-[19px] w-[19px] items-center justify-center rounded-full bg-[#f08437]">
            <svg viewBox="0 0 10 10" className="h-2.5 w-2.5" aria-hidden="true"><path d="M2 2l6 6M8 2L2 8" stroke="#fff" strokeWidth="1.600" /></svg>
          </button>
        </div>
      </header>

      <nav className="flex h-[22px] shrink-0 items-center gap-[15px] border-b border-[#d2d2d2] pl-[7px]">
        {menus.map(([key, rest]) => (
          <button key={rest} type="button">{key && <u className="underline-offset-2">{key}</u>}{rest}</button>
        ))}
      </nav>

      <div role="toolbar" aria-label="Layout" className="flex h-[39px] shrink-0 items-center border-b border-[#bdbdbd] bg-linear-to-b from-[#f9f9f9] to-[#eeeeee] pl-px">
        <span className="flex w-2"><Grip /></span>
        {fileTools.map((t) => (
          <React.Fragment key={t.name}>
            <ToolButton name={t.name} disabled={t.dim}><Icon dim={t.dim}>{t.art}</Icon></ToolButton>
            {t.gap && <Separator />}
          </React.Fragment>
        ))}
        <span className="flex w-4 justify-center"><Grip /></span>
        <ToolButton name="Preview Atlas" disabled><Icon dim><g transform="translate(1 1)"><Globe /></g></Icon></ToolButton>
        <ToolButton name="First Feature" disabled><Icon dim><g transform="translate(3 0)"><ArrowLeft /></g><path d="M3 1v22" stroke="#6d8196" strokeWidth="2.500" /></Icon></ToolButton>
        <ToolButton name="Previous Feature" disabled><Icon dim><ArrowLeft /></Icon></ToolButton>
        <div className="flex h-[30px] w-[84px] rounded-[3px] border border-[#b0b0b0]">
          <input aria-label="Atlas feature" disabled defaultValue="1" className="min-w-0 flex-1 bg-[#ececec] pl-1 text-[#b0b0b0]" />
          <button type="button" aria-label="Choose feature" disabled className="flex w-5 items-center justify-center border-l border-[#b0b0b0] bg-[#f8f8f8] opacity-50"><Caret /></button>
        </div>
        <ToolButton name="Next Feature" disabled><Icon dim><ArrowRight /></Icon></ToolButton>
        <ToolButton name="Last Feature" disabled><Icon dim><g transform="translate(-1 0)"><ArrowRight /></g><path d="M21 1v22" stroke="#6d8196" strokeWidth="2.500" /></Icon></ToolButton>
        <ToolButton name="Print Atlas" disabled><Icon dim><Printer /></Icon></ToolButton>
        <ToolButton name="Export Atlas" disabled><Icon dim><Sheet /><Photo /><ExportBadge /></Icon></ToolButton>
        <span className="flex w-[11px] justify-center opacity-40"><Caret /></span>
        <ToolButton name="Atlas Settings"><Icon><Globe /><Wrench /></Icon></ToolButton>
      </div>

      <div role="toolbar" aria-label="Navigation and actions" className="flex h-[38px] shrink-0 items-center border-b border-[#b9b9b9] bg-linear-to-b from-[#f9f9f9] to-[#eeeeee] pl-px">
        <span className="flex w-2"><Grip /></span>
        {zoomTools.map((t) => <ToolButton key={t.name} name={t.name}><Icon>{t.art}</Icon></ToolButton>)}
        <span className="flex w-4 justify-center pl-1"><Grip /></span>
        {arrangeTools.map((t) => <ToolButton key={t.name} name={t.name}><Icon>{t.art}</Icon></ToolButton>)}
      </div>

      <main className="flex min-h-0 flex-1">
        <div role="toolbar" aria-label="Toolbox" className="flex w-[37px] shrink-0 flex-col items-center border-r border-[#b9b9b9] bg-linear-to-r from-[#f8f8f8] to-[#eeeeee] pt-1.5">
          <Grip vertical={false} />
          <div className="mt-0.5">
            {sideTools.map((t) => (
              <button
                key={t.name}
                type="button"
                aria-label={t.name}
                className={t.active ? "flex h-8 w-8 items-center justify-center rounded-[3px] border border-[#b5b5b5] bg-[#d6d6d6]" : "flex h-8 w-8 items-center justify-center"}
              >
                <Icon>{t.art}</Icon>
              </button>
            ))}
          </div>
        </div>

        <div className="flex min-w-0 flex-1 flex-col border-b border-[#b9b9b9]">
          <TopRuler />
          <div className="flex min-h-0 flex-1">
            <SideRuler />
            <div className="relative min-w-0 flex-1 overflow-hidden bg-[#d7d7d7]">
              <div className="absolute top-10 left-[151px] bg-white shadow-[8px_9px_0_#969696]">
                <LanduseMap />
                <p className="absolute top-11 left-[63px] text-[33px] leading-9 whitespace-nowrap text-black">Land use of the Hadocha sub-catchment</p>
                <PageLegend />
              </div>
            </div>
          </div>
        </div>

        <div className="flex w-1.5 shrink-0 items-center justify-center">
          <svg className="h-4 w-px" aria-hidden="true"><path d="M.5 0v16" stroke="#aaa" strokeDasharray="1 2" /></svg>
        </div>
        <SidePanels />
      </main>

      <footer className="flex h-[31px] shrink-0 items-center justify-end pt-0.5 pr-[25px]">
        <span className="mr-[7px]">x: -20.7101 mm</span>
        <span className="mr-[7px]">y: 19.5595 mm</span>
        <span className="mr-[57px]">page: 1</span>
        <div className="mr-2 flex h-[25px] w-[134px] rounded-[3px] border border-[#b0b0b0] bg-white">
          <input aria-label="Zoom level" value={zoom} onChange={(e) => setZoom(e.target.value)} className="min-w-0 flex-1 pl-[3px]" />
          <button type="button" aria-label="Zoom presets" className="flex w-5 items-center justify-center border-l border-[#b0b0b0] bg-[#f6f6f6]"><Caret /></button>
        </div>
        <input
          type="range"
          aria-label="Zoom"
          defaultValue="3"
          className="h-4 w-[98px] appearance-none bg-transparent [&::-webkit-slider-runnable-track]:h-[5px] [&::-webkit-slider-runnable-track]:rounded-full [&::-webkit-slider-runnable-track]:border [&::-webkit-slider-runnable-track]:border-[#b0b0b0] [&::-webkit-slider-runnable-track]:bg-linear-to-r [&::-webkit-slider-runnable-track]:from-[#3d9bd8] [&::-webkit-slider-runnable-track]:from-8% [&::-webkit-slider-runnable-track]:to-[#d0d0d0] [&::-webkit-slider-runnable-track]:to-8% [&::-webkit-slider-thumb]:-mt-[5px] [&::-webkit-slider-thumb]:h-[13px] [&::-webkit-slider-thumb]:w-[13px] [&::-webkit-slider-thumb]:appearance-none [&::-webkit-slider-thumb]:rounded-[3px] [&::-webkit-slider-thumb]:border [&::-webkit-slider-thumb]:border-[#aaa] [&::-webkit-slider-thumb]:bg-white"
        />
      </footer>
      <div className="flex h-0.5 shrink-0 border-t border-[#777] bg-[#c9c9c9] pl-[42%]"><span className="w-48 bg-[#2f7524]" /></div>
    </div>
  );
}
